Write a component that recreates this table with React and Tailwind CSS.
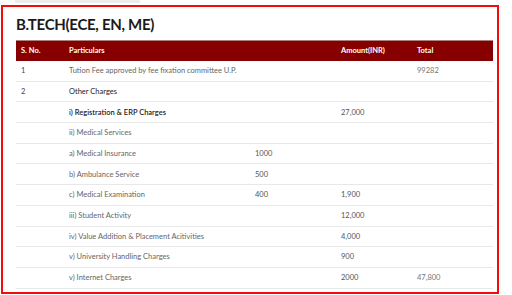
const rows = [
  { sn: "1", item: "Tution Fee approved by fee fixation committee U.P.", total: "99282" },
  { sn: "2", item: "Other Charges", dark: true },
  { item: "i) Registration & ERP Charges", amount: "27,000", dark: true, bold: true },
  { item: "ii) Medical Services" },
  { item: "a) Medical Insurance", sub: "1000" },
  { item: "b) Ambulance Service", sub: "500" },
  { item: "c) Medical Examination", sub: "400", amount: "1,900" },
  { item: "iii) Student Activity", amount: "12,000" },
  { item: "iv) Value Addition & Placement Acitivities", amount: "4,000" },
  { item: "v) University Handling Charges", amount: "900" },
  { item: "v) Internet Charges", amount: "2000", total: "47,800" },
];

export default function App() {
  return (
    <div className="w-[512px] h-[295px] overflow-hidden bg-white font-['Lato','Liberation_Sans',sans-serif]">
      <div className="ml-[15px] h-[3px] w-[125px] bg-[#ececec]" />
      <div className="mt-[2px] ml-[1px] w-[498px] h-[289px] border-2 border-[#f20d0d] overflow-hidden px-[13px]">
        <h2 className="mt-[5px] h-[25px] text-[15px] font-bold leading-[25px] text-[#1a1a1a] tracking-[-0.3px]">
          B.TECH(ECE, EN, ME)
        </h2>
        <table className="mt-[3px] w-[477px] table-fixed border-collapse text-[7.5px]">
          <colgroup>
            <col className="w-[48px]" />
            <col className="w-[186px]" />
            <col className="w-[86px]" />
            <col className="w-[76px]" />
            <col className="w-[81px]" />
          </colgroup>
          <thead>
            <tr className="h-[20px] bg-[#870000] text-white font-bold text-left border-t border-[#b08080]">
              <th className="pl-[5px] font-bold">S. No.</th>
              <th className="pl-[5px] font-bold">Particulars</th>
              <th />
              <th className="pl-[5px] font-bold">Amount(INR)</th>
              <th className="pl-[5px] font-bold">Total</th>
            </tr>
          </thead>
          <tbody>
            {rows.map((r, i) => (
              <tr key={i} className="h-[20.7px] border-b border-[#e8e8e8] text-[#666]">
                <td className="pl-[5px] text-[#444]">{r.sn}</td>
                <td
                  className={
                    "pl-[5px] whitespace-nowrap " +
                    (r.dark ? "text-[#222] " : "") +
                    (r.bold ? "font-semibold" : "")
                  }
                >
                  {r.item}
                </td>
                <td className="pl-[5px] text-[#555]">{r.sub}</td>
                <td className="pl-[5px] text-[#555]">{r.amount}</td>
                <td className="pl-[5px] text-[#777]">{r.total}</td>
              </tr>
            ))}
          </tbody>
        </table>
      </div>
    </div>
  );
}
